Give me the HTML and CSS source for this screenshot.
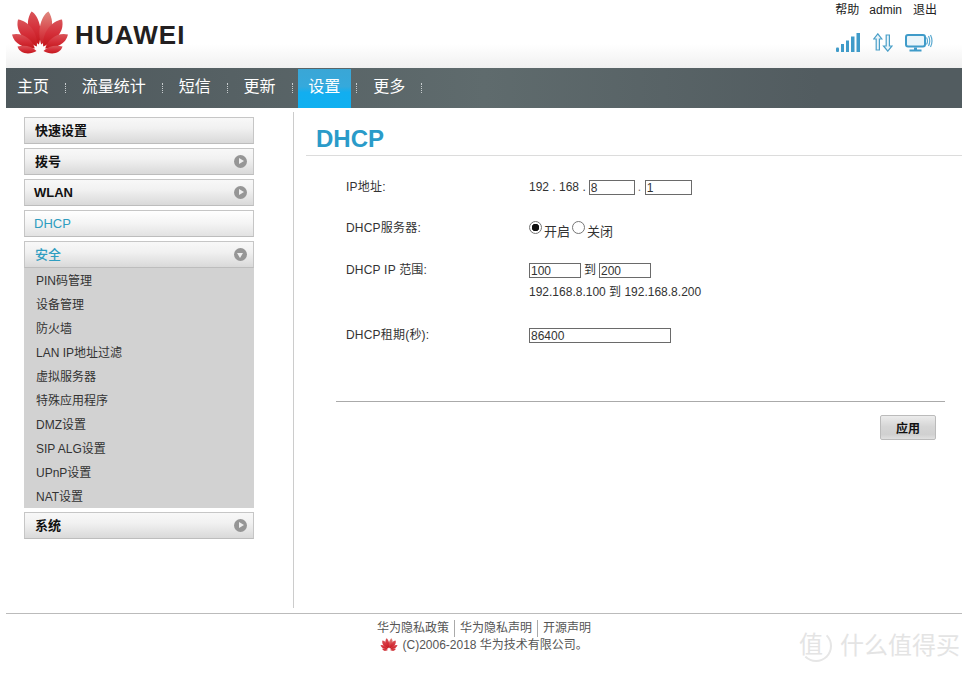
FILE: index.html
```html
<!DOCTYPE html>
<html lang="zh-CN">
<head>
    <meta charset="UTF-8">
    <meta name="viewport" content="width=device-width, initial-scale=1.0">
    <title>DHCP</title>
    <link rel="stylesheet" href="styles.css">
</head>
<body>
    <svg class="svg-defs" width="0" height="0" aria-hidden="true">
        <defs>
            <linearGradient id="petalGrad" x1="0" y1="0" x2="0" y2="1">
                <stop offset="0" stop-color="#d9555a"/>
                <stop offset="0.5" stop-color="#d5303a"/>
                <stop offset="1" stop-color="#c4161c"/>
            </linearGradient>
            <linearGradient id="petalLight" x1="0" y1="0" x2="0" y2="1">
                <stop offset="0" stop-color="#e08a80"/>
                <stop offset="0.6" stop-color="#d8454a"/>
                <stop offset="1" stop-color="#c8202a"/>
            </linearGradient>
            <symbol id="huaweiLogo" viewBox="12 11 56 43">
                <g fill="url(#petalGrad)">
                    <path d="M38.800 44.500C30 38 23.500 24 31.500 11.500C38.500 15 43.500 31 38.800 44.500Z"/>
                    <path d="M36.800 46.500C25 41 15 32 18 19.500C28 20.500 38.500 33 36.800 46.500Z"/>
                    <path d="M34.800 48.500C24 48.500 14 44 12 34.500C22 32 32.500 39 34.800 48.500Z"/>
                    <path d="M36.500 51C30 55 20 54.500 17.500 46.500C24 44.500 32 46 36.500 51Z"/>
                    <path d="M41.200 44.500C50 38 56.500 24 48.500 11.500C41.500 15 36.500 31 41.200 44.500Z" fill="url(#petalLight)"/>
                    <path d="M43.200 46.500C55 41 65 32 62 19.500C52 20.500 41.500 33 43.200 46.500Z"/>
                    <path d="M45.200 48.500C56 48.500 66 44 68 34.500C58 32 47.500 39 45.200 48.500Z"/>
                    <path d="M43.500 51C50 55 60 54.500 62.500 46.500C56 44.500 48 46 43.500 51Z"/>
                </g>
            </symbol>
        </defs>
    </svg>

    <div class="page">
        <header class="top">
            <div class="brand">
                <svg class="logo" width="56" height="43"><use href="#huaweiLogo"/></svg>
                <span class="brand-name">HUAWEI</span>
            </div>
            <div class="top-right">
                <div class="top-links">
                    <a href="#">帮助</a>
                    <a href="#">admin</a>
                    <a href="#">退出</a>
                </div>
                <div class="status-icons">
                    <svg width="24" height="19" viewBox="0 0 24 19" fill="#3f9bc9">
                        <rect x="0" y="14.500" width="3" height="4.500" rx="1"/>
                        <rect x="5" y="11" width="3" height="8"/>
                        <rect x="10" y="7.500" width="3" height="11.500"/>
                        <rect x="15" y="3.500" width="3.500" height="15.500"/>
                        <rect x="20.500" y="0" width="3.500" height="19"/>
                    </svg>
                    <svg width="20" height="19" viewBox="0 0 20 19" fill="#eaf5fa" stroke="#4a9fc8" stroke-width="1.200">
                        <path d="M4.800 .8L.8 6H3.200V17H6.400V6H8.800Z"/>
                        <path d="M14.800 18.200L19 13H16.400V2H13.200V13H10.500Z"/>
                    </svg>
                    <svg class="icon-monitor" width="28" height="18" viewBox="0 0 28 18">
                        <rect x="1" y="1" width="19" height="11.500" rx="2" fill="#eaf5fa" stroke="#3f9bc9" stroke-width="2"/>
                        <path d="M9 13.500H12V16H9Z" fill="#3f9bc9"/>
                        <rect x="4.500" y="15.500" width="12" height="2" fill="#3f9bc9"/>
                        <path d="M21.500 3.500Q23.500 7 21.500 10.500M23.500 2Q26 7 23.500 12M25.500 1Q28.500 7 25.500 13" fill="none" stroke="#5aa9d0" stroke-width="1.200"/>
                    </svg>
                </div>
            </div>
        </header>

        <nav class="nav">
            <a class="nav-item" href="#">主页</a><span class="nav-sep"></span>
            <a class="nav-item" href="#">流量统计</a><span class="nav-sep"></span>
            <a class="nav-item" href="#">短信</a><span class="nav-sep"></span>
            <a class="nav-item" href="#">更新</a><span class="nav-sep"></span>
            <a class="nav-item active" href="#">设置</a><span class="nav-sep"></span>
            <a class="nav-item" href="#">更多</a><span class="nav-sep"></span>
        </nav>

        <div class="body-row">
            <aside class="sidebar">
                <div class="menu-item">快速设置</div>
                <div class="menu-item has-arrow">拨号<span class="arrow"></span></div>
                <div class="menu-item has-arrow latin">WLAN<span class="arrow"></span></div>
                <div class="menu-item current">DHCP</div>
                <div class="menu-item open has-arrow">安全<span class="arrow down"></span></div>
                <ul class="submenu">
                    <li>PIN码管理</li>
                    <li>设备管理</li>
                    <li>防火墙</li>
                    <li>LAN IP地址过滤</li>
                    <li>虚拟服务器</li>
                    <li>特殊应用程序</li>
                    <li>DMZ设置</li>
                    <li>SIP ALG设置</li>
                    <li>UPnP设置</li>
                    <li>NAT设置</li>
                </ul>
                <div class="menu-item has-arrow">系统<span class="arrow"></span></div>
            </aside>

            <main class="content">
                <h1 class="title">DHCP</h1>
                <div class="form">
                    <div class="form-row row-ip">
                        <span class="label">IP地址:</span>
                        <div class="field inline">
                            <span>192 . 168 .</span>
                            <input class="text-input ip-input" type="text" value="8">
                            <span class="dot">.</span>
                            <input class="text-input ip-input wide" type="text" value="1">
                        </div>
                    </div>
                    <div class="form-row row-server">
                        <span class="label">DHCP服务器:</span>
                        <div class="field radios">
                            <input type="radio" name="server" checked><span class="radio-text">开启</span>
                            <input type="radio" name="server"><span class="radio-text">关闭</span>
                        </div>
                    </div>
                    <div class="form-row row-range">
                        <span class="label">DHCP IP 范围:</span>
                        <div class="field">
                            <div class="inline">
                                <input class="text-input range-input" type="text" value="100">
                                <span>到</span>
                                <input class="text-input range-input" type="text" value="200">
                            </div>
                            <p class="hint">192.168.8.100 到 192.168.8.200</p>
                        </div>
                    </div>
                    <div class="form-row row-lease">
                        <span class="label">DHCP租期(秒):</span>
                        <div class="field">
                            <input class="text-input lease-input" type="text" value="86400">
                        </div>
                    </div>
                </div>
                <div class="actions">
                    <button class="apply-btn" type="button">应用</button>
                </div>
            </main>
        </div>

        <footer class="footer">
            <div class="footer-links">
                <a href="#">华为隐私政策</a><a href="#">华为隐私声明</a><a href="#">开源声明</a>
            </div>
            <div class="copyright">
                <svg class="logo-small" width="18" height="13"><use href="#huaweiLogo"/></svg>
                (C)2006-2018 华为技术有限公司。
            </div>
        </footer>
    </div>

    <!-- watermark sits over the page -->
    <div class="watermark">
        <span class="wm-badge">值</span>
        <span>什么值得买</span>
    </div>
</body>
</html>
```

FILE: styles.css
```css
body {
    margin: 0;
    background-color: #fff;
    color: #333;
    font-family: "Liberation Sans", "Noto Sans CJK SC", sans-serif;
    font-size: 12px;
}

a {
    color: inherit;
    text-decoration: none;
}

.svg-defs {
    position: absolute;
}

.page {
    width: 956px;
    margin-left: 6px;
}

/* header */
.top {
    display: flex;
    justify-content: space-between;
    height: 68px;
    background: linear-gradient(to bottom, #fff 0%, #fff 65%, #f0f0f0 100%);
}

.brand {
    display: flex;
    align-items: flex-start;
    padding: 11px 0 0 6px;
}

.brand-name {
    margin: 10px 0 0 7px;
    color: #231f20;
    font-size: 26px;
    font-weight: bold;
    letter-spacing: 1.1px;
    line-height: 29px;
}

.top-right {
    display: flex;
    flex-direction: column;
    align-items: flex-end;
    padding-right: 25px;
}

.top-links {
    display: flex;
    gap: 10px;
    padding-top: 2px;
    color: #222;
    line-height: 17px;
}

.top-links a + a + a {
    margin-left: 1px;
}

.status-icons {
    display: flex;
    align-items: flex-end;
    gap: 13px;
    height: 33px;
    padding-right: 4px;
}

.icon-monitor {
    margin-left: -1px;
}

/* nav bar */
.nav {
    display: flex;
    align-items: center;
    height: 40px;
    background: linear-gradient(to right, #4e585c, #5f6b6d 50%, #525c60 85%);
}

.nav-item {
    height: 39px;
    margin: 1px 6px 0;
    padding: 0 10px;
    color: #fff;
    font-size: 16px;
    line-height: 36px;
}

.nav-item:first-child {
    margin-left: 1px;
}

.nav-item.active {
    margin-right: 5px;
    padding-right: 11px;
    background: linear-gradient(to bottom, #3aa6d6 0%, #35a9dc 45%, #12aef0 60%, #0fb0f0 100%);
}

.nav-sep {
    width: 1px;
    height: 10px;
    margin-right: -0.2px;
    border-left: 1px dotted #c8cdcf;
    box-sizing: border-box;
}

.body-row {
    display: flex;
    height: 496px;
    margin-top: 4px;
}

/* left menu */
.sidebar {
    box-sizing: border-box;
    width: 288px;
    padding: 5px 0 0 18px;
    border-right: 1px solid #ccc;
}

.menu-item {
    box-sizing: border-box;
    display: flex;
    align-items: center;
    justify-content: space-between;
    width: 230px;
    height: 27px;
    margin-bottom: 4px;
    padding: 0 6px 2px 10px;
    border: 1px solid #c6c6c6;
    border-bottom-color: #bdbdbd;
    background: linear-gradient(to bottom, #f8f8f8, #f1f1f1 40%, #d9d9d9);
    color: #111;
    font-size: 13px;
    font-weight: bold;
}

.menu-item.latin {
    padding: 0 6px 0 9px;
}

.menu-item.current {
    padding: 0 6px 0 9px;
    background: linear-gradient(to bottom, #fff, #f4f4f4 50%, #e2e2e2);
    color: #2f9dc0;
    font-weight: normal;
}

.menu-item.open {
    margin-bottom: 0;
    color: #2f9dc0;
    font-weight: 500;
}

.arrow {
    position: relative;
    top: 1px;
    width: 13px;
    height: 13px;
    border-radius: 50%;
    background-color: #969696;
}

.latin .arrow {
    top: 0;
}

.arrow::after {
    content: "";
    position: absolute;
    top: 3px;
    left: 5px;
    border-top: 3.5px solid transparent;
    border-bottom: 3.5px solid transparent;
    border-left: 5px solid #eee;
}

.arrow.down::after {
    top: 5px;
    left: 3px;
    border-top: 5px solid #eee;
    border-right: 3.5px solid transparent;
    border-bottom: 0;
    border-left: 3.5px solid transparent;
}

.submenu {
    width: 230px;
    margin: 0 0 4px;
    padding: 0;
    list-style: none;
    background-color: #d2d2d2;
}

.submenu li {
    box-sizing: border-box;
    height: 24px;
    padding: 1px 0 0 12px;
    line-height: 24px;
}

/* main panel */
.content {
    flex: 1;
    padding-top: 11px;
}

.title {
    margin: 0 0 0 12px;
    padding: 0 0 1px 10px;
    border-bottom: 1px solid #dcdcdc;
    color: #2a9bc9;
    font-size: 24px;
    line-height: 31px;
}

.form {
    padding-left: 52px;
}

.form-row {
    display: flex;
}

.label {
    width: 183px;
    letter-spacing: .2px;
    line-height: 14px;
}

.row-ip {
    height: 17px;
    padding-top: 24px;
}

.row-server {
    height: 17px;
    padding-top: 24px;
}

.row-range {
    height: 36px;
    padding-top: 25px;
}

.row-lease {
    height: 17px;
    padding-top: 29px;
}

.field {
    line-height: 15px;
}

.inline {
    display: flex;
    gap: 3px;
}

.text-input {
    box-sizing: border-box;
    height: 15px;
    padding: 0 1px;
    border: 1px solid #6a6a6a;
    background-color: #fff;
    color: #333;
    font-family: inherit;
    font-size: 12px;
}

.ip-input {
    width: 46px;
}

.ip-input.wide {
    width: 47px;
}

.dot {
    width: 4px;
    color: #777;
}

.radios {
    display: flex;
    align-items: flex-start;
}

.radios input {
    appearance: none;
    box-sizing: border-box;
    width: 13px;
    height: 13px;
    margin: 0 2px 0 0;
    border: 1px solid #767676;
    border-radius: 50%;
    background-color: #fff;
}

.radios input:checked {
    background: radial-gradient(circle, #111 0, #111 3.5px, #fff 4px);
}

.radio-text {
    margin-right: 2px;
    font-size: 13px;
    line-height: 22px;
}

.range-input {
    width: 52px;
}

.hint {
    margin: 7px 0 0;
}

.lease-input {
    width: 142px;
}

.actions {
    display: flex;
    justify-content: flex-end;
    margin: 56px 17px 0 42px;
    padding-top: 13px;
    border-top: 1px solid #aaa;
}

.apply-btn {
    width: 56px;
    height: 25px;
    margin-right: 9px;
    padding: 0;
    border: 1px solid #bbb;
    border-radius: 2px;
    background: linear-gradient(to bottom, #ececec, #d6d6d6 45%, #d0d0d0 80%, #e0e0e0);
    color: #111;
    font-family: inherit;
    font-size: 12px;
    font-weight: bold;
}

/* footer */
.footer {
    margin-top: 5px;
    padding-top: 6px;
    border-top: 1px solid #bbb;
    color: #555;
    text-align: center;
}

.footer-links {
    display: flex;
    justify-content: center;
    line-height: 17px;
}

.footer-links a {
    padding: 0 5px;
}

.footer-links a + a {
    border-left: 1px solid #aaa;
}

.copyright {
    line-height: 17px;
}

.logo-small {
    margin-right: 1px;
    vertical-align: -2px;
}

.watermark {
    position: absolute;
    top: 630px;
    left: 800px;
    display: flex;
    align-items: center;
    gap: 8px;
    color: #e4e4e4;
    font-size: 24px;
    line-height: 32px;
}

.wm-badge {
    box-sizing: border-box;
    width: 32px;
    height: 32px;
    border: 2px solid #e6e6e6;
    border-top-color: transparent;
    border-left-color: transparent;
    border-radius: 50%;
    font-size: 24px;
    line-height: 26px;
    text-indent: -3px;
}
```
